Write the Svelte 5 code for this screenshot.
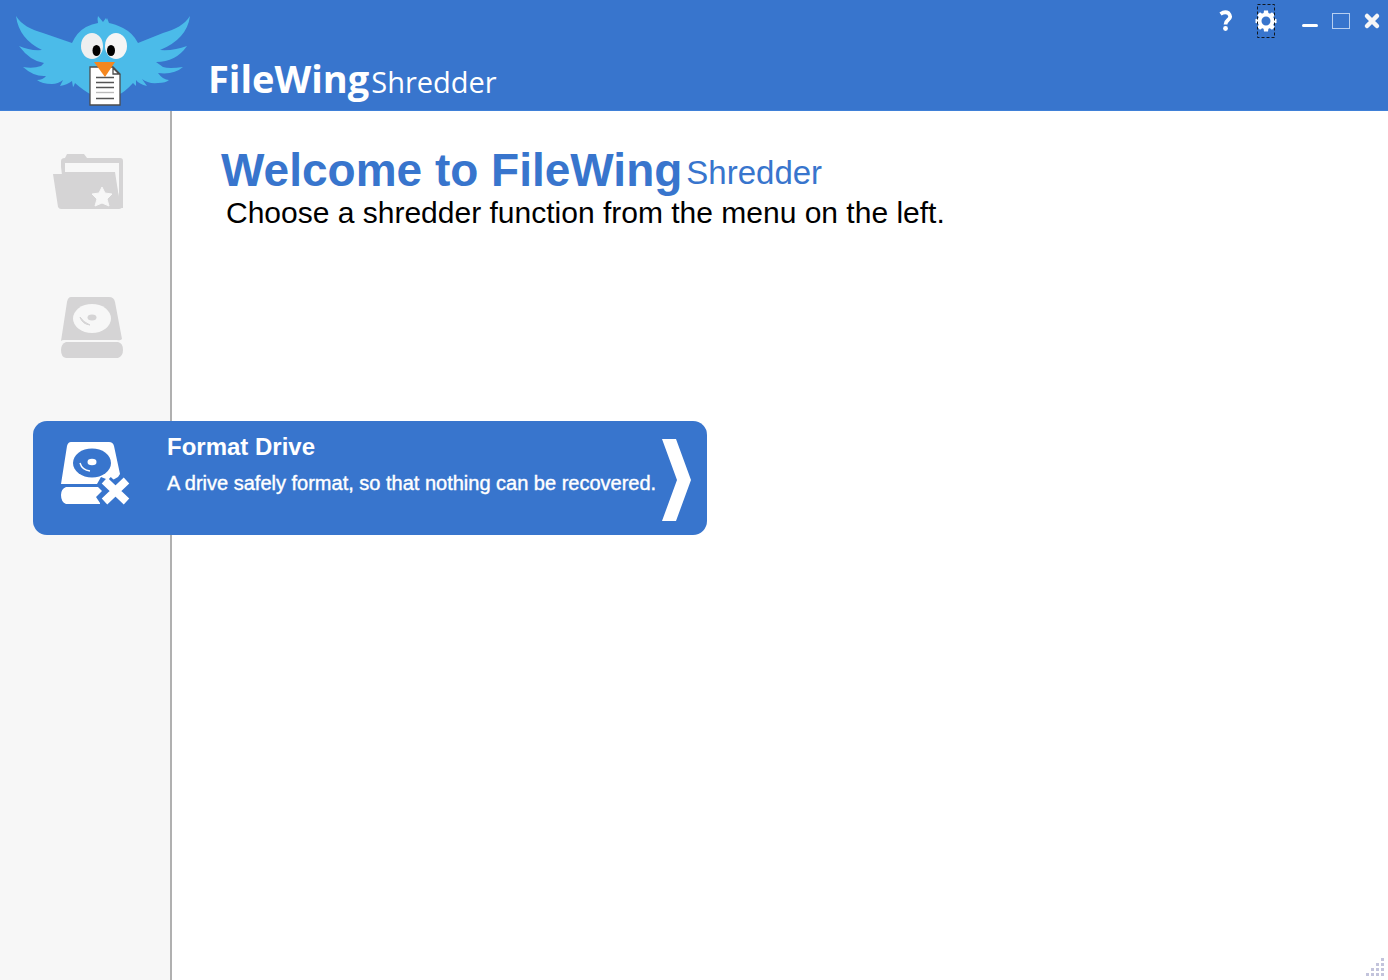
<script>
  let selected = $state('format');
</script>

<div class="window">
  <header>
    <svg class="logo" viewBox="0 0 200 110" aria-hidden="true">
      <g fill="#4bbbe9">
        <path d="M16 16C22 25 30 29 43 33L72 43Q77 32 86 27Q92 24 98 23Q97 19 98 16L103 22L106 18V95H92Q84 91 75 83Q74 86 73 87L72 81Q67 85 60 86L63 80Q58 84 52 84Q42 84 37 80Q43 80 46 76Q34 77 23 67Q33 69 41 66L44 63Q30 61 19 46Q30 51 42 50Q19 39 16 16Z" />
        <path d="M190 16C184 25 176 29 163 33L138 43Q133 33 123 28Q115 24 109 23L107 18L105 22L103 24V95H118Q125 92 133 83L136 86L136 80Q139 84 147 86L142 79Q148 84 158 83Q166 83 169 80Q163 80 158 73Q174 75 183 67Q169 69 163 67L156 62Q176 62 187 46Q174 51 160 50Q187 39 190 16Z" />
      </g>
      <ellipse cx="92" cy="46" rx="11" ry="13" fill="#eeeff0" />
      <ellipse cx="116" cy="46" rx="11" ry="13" fill="#f5f5f5" />
      <ellipse cx="96.500" cy="50.500" rx="4" ry="5.500" fill="#000" />
      <ellipse cx="111" cy="50.500" rx="4" ry="5.500" fill="#000" />
      <path d="M90 67H113L120 74V105H90Z" fill="#fff" stroke="#4c4c4c" stroke-width="1.3" />
      <path d="M113 68V74H119Z" fill="#fff" stroke="#4c4c4c" stroke-width="1.3" />
      <path d="M96 77.5H114M96 82.5H114M96 87.5H114M96 98.500H114" stroke="#555" stroke-width="1.4" />
      <path d="M96 92.500H114" stroke="#bbb" stroke-width="1.400" />
      <path d="M94 62H115L105 77Z" fill="#f5871f" />
    </svg>
    <div class="brand"><strong>FileWing</strong><span>Shredder</span></div>
    <div class="controls">
      <button aria-label="Help">
        <svg width="14" height="24" viewBox="0 0 14 24"><path d="M1.500 5Q6 2 9.500 4.200Q13 8 9 11Q6.500 13 6.500 15.500" fill="none" stroke="#fff" stroke-width="3.800" /><circle cx="6.500" cy="19.500" r="2.400" fill="#fff" /></svg>
      </button>
      <button class="settings" aria-label="Settings">
        <svg width="22" height="34" viewBox="0 0 22 34">
          <g transform="translate(11 17)">
            <circle r="6.400" fill="none" stroke="#fff" stroke-width="3.800" />
            {#each [0, 45, 90, 135] as angle}
              <path d="M-2-10.500H2L2.500-7H-2.500ZM-2 10.500H2L2.500 7H-2.500Z" fill="#fff" transform="rotate({angle})" />
            {/each}
          </g>
          <rect x="2.500" y=".5" width="17" height="33" fill="none" stroke="#101820" stroke-dasharray="3 2" />
        </svg>
      </button>
      <button aria-label="Minimize"><svg width="18" height="20" viewBox="0 0 18 20"><path d="M2.500 14.500H15.500" stroke="#fff" stroke-width="3" stroke-linecap="round" /></svg></button>
      <button class="maximize" aria-label="Maximize"><svg width="20" height="18" viewBox="0 0 20 18"><rect x="1.500" y="1.500" width="17" height="15" fill="none" stroke="#b7cff0" /></svg></button>
      <button aria-label="Close"><svg width="18" height="18" viewBox="0 0 18 18"><path d="M4 4L14 14M14 4L4 14" stroke="#f6f6f6" stroke-width="4.500" stroke-linecap="round" /></svg></button>
    </div>
  </header>

  <div class="body">
    <nav aria-label="Shredder functions">
      <button class="item" aria-label="Shred files" onclick={() => (selected = 'files')}>
        <svg class="icon" viewBox="0 0 74 74">
          <path d="M8 18V12Q8 9 12 9L14 5H31L34 9H67Q70 9 70 12V59H64L59 26H9ZM12 14V23H62L66 49V14Z" fill="#d5d4d5" fill-rule="evenodd" />
          <path d="M0 25H58Q60 25 61 27L66 48L69 50V57Q69 60 66 60H8Q6 60 5 58Z" fill="#d5d4d5" />
          <path d="M49 38L52 44L59 45L54 50L56 57L49 54L42 57L44 50L39 45L46 44Z" fill="#f7f7f7" stroke="#f7f7f7" stroke-linejoin="round" />
        </svg>
      </button>
      <button class="item" aria-label="Shred drive" onclick={() => (selected = 'drive')}>
        <svg class="icon" viewBox="0 0 74 74">
          <path d="M18 3H56Q61 3 62 8L69 45Q67 47 64 46H11Q9 46 8 47L14 8Q15 3 18 3Z" fill="#d5d4d5" />
          <ellipse cx="39" cy="24.500" rx="19" ry="14.500" fill="#f7f7f7" />
          <ellipse cx="39" cy="23.500" rx="4.500" ry="3" fill="#d5d4d5" />
          <path d="M27 23Q29 30 37 31Q30 28 27 23Z" fill="#d5d4d5" stroke="#d5d4d5" />
          <path d="M13 48H65Q70 49 70 56Q70 62 65 64H13Q8 63 8 56Q8 50 13 48Z" fill="#d5d4d5" />
        </svg>
      </button>
      <button class="item active" aria-pressed={selected === 'format'} onclick={() => (selected = 'format')}>
        <svg class="icon" viewBox="0 0 74 74">
          <path d="M18 3H56Q60 3 61 7L67 35L65 38L58 42L48 38L44 45H8L14 7Q15 3 18 3Z" fill="#fff" />
          <ellipse cx="39" cy="24" rx="19" ry="14.500" fill="#3875cd" />
          <ellipse cx="39" cy="23" rx="4.500" ry="3.300" fill="#fff" />
          <path d="M27 24Q29 31 37 32" fill="none" stroke="#fff" stroke-width="1.400" />
          <path d="M13 48H45L49 52L43 58L47 64V65H13Q8 63 8 56Q8 50 13 48Z" fill="#fff" />
          <path d="M53 43L72 61M72 43L53 61" stroke="#3875cd" stroke-width="14" />
          <path d="M51.500 41.500L73.500 62.500M73.500 41.500L51.500 62.500" stroke="#fff" stroke-width="8" />
        </svg>
        <span class="text">
          <span class="title">Format Drive</span>
          <span class="detail">A drive safely format, so that nothing can be recovered.</span>
        </span>
        <svg class="arrow" viewBox="0 0 30 82" aria-hidden="true"><path d="M1 0H15L30 41L15 82H1L16 41Z" fill="#fff" /></svg>
      </button>
    </nav>
    <main>
      <h1><strong>Welcome to FileWing</strong><span>Shredder</span></h1>
      <p>Choose a shredder function from the menu on the left.</p>
      <svg class="grip" width="20" height="20" viewBox="0 0 20 20" aria-hidden="true">
        {#each [[15, 0], [10, 5], [15, 5], [5, 10], [10, 10], [15, 10], [0, 15], [5, 15], [10, 15], [15, 15]] as [x, y]}
          <rect {x} {y} width="3" height="3" fill="#c3c4dc" />
        {/each}
      </svg>
    </main>
  </div>
</div>

<style>
  :global(body) {
    margin: 0;
  }
  .window {
    display: flex;
    flex-direction: column;
    min-height: 100vh;
    background: #fff;
    font-family: "Liberation Sans", Arial, sans-serif;
  }
  header {
    display: flex;
    align-items: flex-start;
    box-sizing: border-box;
    background: #3875cd;
    border-bottom: 1px solid #3f80d8;
    color: #fff;
  }
  .logo {
    width: 200px;
    height: 110px;
    flex: none;
  }
  .brand {
    display: flex;
    align-items: baseline;
    gap: 2px;
    padding: 51px 0 0 8px;
    font-family: "Open Sans", "Noto Sans", sans-serif;
    line-height: 54px;
  }
  .brand strong {
    font-size: 38px;
  }
  .brand span {
    font-size: 29px;
  }
  .controls {
    display: flex;
    align-items: center;
    margin-left: auto;
    padding: 4px 7px 0 0;
  }
  button {
    display: flex;
    padding: 0;
    border: 0;
    background: none;
    color: inherit;
    font: inherit;
    cursor: pointer;
  }
  .settings {
    margin: 0 24px 0 22px;
  }
  .maximize {
    margin: 0 12px;
  }
  .body {
    display: flex;
    flex: 1;
  }
  nav {
    display: flex;
    flex-direction: column;
    align-items: flex-start;
    gap: 31px;
    box-sizing: border-box;
    width: 172px;
    flex: none;
    padding: 20px 0 0 33px;
    background: #f7f7f7;
    border-right: 2px solid #b0b0b0;
  }
  .item {
    align-items: flex-start;
    box-sizing: border-box;
    height: 114px;
    padding: 18px 16px 0 20px;
    border-radius: 14px;
    text-align: left;
  }
  .active {
    position: relative;
    width: 674px;
    background: #3875cd;
    color: #fff;
  }
  .icon {
    width: 74px;
    height: 74px;
    flex: none;
    overflow: visible;
  }
  .text {
    display: flex;
    flex: 1;
    flex-direction: column;
    gap: 8px;
    margin: -6px 0 0 40px;
    white-space: nowrap;
  }
  .title {
    font-size: 24px;
    font-weight: bold;
    line-height: 28px;
  }
  .detail {
    font-size: 20px;
    line-height: 28px;
    -webkit-text-stroke: 0.4px #fff;
  }
  .arrow {
    width: 30px;
    height: 82px;
    flex: none;
  }
  main {
    display: flex;
    flex: 1;
    flex-direction: column;
    padding: 32px 2px 2px 49px;
  }
  h1 {
    display: flex;
    gap: 4px;
    margin: 0;
    color: #3875cd;
    font-size: 46px;
    line-height: 54px;
  }
  h1 span {
    font-size: 33px;
    font-weight: normal;
    line-height: 60px;
  }
  p {
    margin: -7px 0 0 5px;
    color: #000;
    font-size: 30px;
    line-height: 34px;
  }
  .grip {
    margin: auto 0 0 auto;
  }
</style>
